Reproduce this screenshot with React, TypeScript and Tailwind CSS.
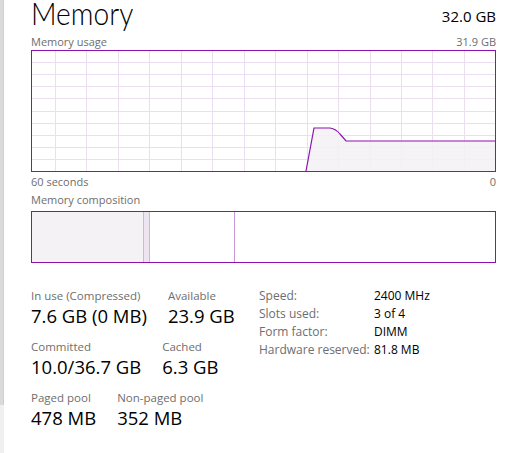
import React from "react";

// Memory page of the performance panel

const PURPLE = "#8b12ae";
const GRID = "#ecdef1";
const FILL = "#f4f2f5";

const W = 464;
const H = 121;

function UsageChart() {
  const cols = Array.from({ length: 14 }, (_, i) => 24 + i * 31.45);
  const rows = Array.from({ length: 9 }, (_, i) => (i + 1) * 12.1);
  const line = "M275 121 L283 78 L299 78 Q305 79 309 84 L315 91 L464 91";
  return (
    <svg width={W + 1} height={H + 1} viewBox={`0 0 ${W + 1} ${H + 1}`} className="block">
      {cols.map((x) => (
        <line key={`c${x}`} x1={Math.round(x) + 0.5} x2={Math.round(x) + 0.5} y1={0} y2={H} stroke={GRID} strokeWidth={1} />
      ))}
      {rows.map((y) => (
        <line key={`r${y}`} x1={0} x2={W} y1={Math.round(y) + 0.5} y2={Math.round(y) + 0.5} stroke={GRID} strokeWidth={1} />
      ))}
      <path d={`${line} L464 121 Z`} fill={FILL} fillOpacity={0.9} />
      <path d={line} fill="none" stroke={PURPLE} strokeWidth={1.2} />
      <rect x={0.5} y={0.5} width={W} height={H} fill="none" stroke={PURPLE} strokeWidth={1} />
    </svg>
  );
}

function Stat({ label, value }: { label: string; value: string }) {
  return (
    <div className="flex flex-col">
      <span className="text-[11.5px] leading-[16px] text-[#6e6e6e]">{label}</span>
      <span className="text-[18.5px] leading-[24px] text-black">{value}</span>
    </div>
  );
}

const SPECS = [
  ["Speed:", "2400 MHz"],
  ["Slots used:", "3 of 4"],
  ["Form factor:", "DIMM"],
  ["Hardware reserved:", "81.8 MB"],
];

export default function App() {
  return (
    <div
      className="w-[520px] h-[453px] bg-white flex overflow-hidden"
      style={{ fontFamily: '"Open Sans", "Noto Sans", sans-serif' }}
    >
      {/* left splitter */}
      <div className="w-[4px] flex flex-col bg-[#f0f0f0]">
        <div className="h-[405px] bg-[#dadada] border-r border-[#cfcfcf]" />
      </div>

      <div className="flex-1 pl-[27px] pr-[24px] flex flex-col">
        {/* header */}
        <div className="flex items-start justify-between h-[33px]">
          <h1
            className="text-[32px] leading-[32px] font-light text-black -mt-[3px] origin-left scale-x-[0.88]"
            style={{ fontFamily: 'Lato, "Open Sans", sans-serif' }}
          >
            Memory
          </h1>
          <span className="text-[15px] leading-[18px] text-black mt-[7px]">32.0 GB</span>
        </div>

        <div className="flex justify-between text-[11px] leading-[16px] text-[#6e6e6e] mt-[1px]">
          <span>Memory usage</span>
          <span>31.9 GB</span>
        </div>

        <UsageChart />

        <div className="flex justify-between text-[11px] leading-[16px] text-[#6e6e6e] mt-[2px]">
          <span>60 seconds</span>
          <span>0</span>
        </div>

        <div className="text-[11px] leading-[16px] text-[#6e6e6e] mt-[2px]">Memory composition</div>

        <div className="mt-[3px] h-[52px] w-[465px] border border-[#8b12ae] flex">
          <div className="w-[111px] bg-[#f4f2f5]" />
          <div className="w-[7px] bg-[#ece4ef] border-x border-[#d3b3df]" />
          <div className="w-[85px] border-r border-[#c998dc]" />
          <div className="flex-1" />
        </div>

        {/* stats */}
        <div className="flex mt-[25px]">
          <div className="w-[228px] flex flex-col">
            <div className="flex gap-[21px]">
              <Stat label="In use (Compressed)" value="7.6 GB (0 MB)" />
              <Stat label="Available" value="23.9 GB" />
            </div>
            <div className="flex gap-[21px] mt-[11px]">
              <Stat label="Committed" value="10.0/36.7 GB" />
              <Stat label="Cached" value="6.3 GB" />
            </div>
            <div className="flex gap-[21px] mt-[11px]">
              <Stat label="Paged pool" value="478 MB" />
              <Stat label="Non-paged pool" value="352 MB" />
            </div>
          </div>

          <div className="flex flex-col -mt-[1px]">
            {SPECS.map(([k, v]) => (
              <div key={k} className="flex text-[12px] leading-[18px]">
                <span className="w-[115px] text-[#6e6e6e]">{k}</span>
                <span className="text-black">{v}</span>
              </div>
            ))}
          </div>
        </div>
      </div>
    </div>
  );
}
